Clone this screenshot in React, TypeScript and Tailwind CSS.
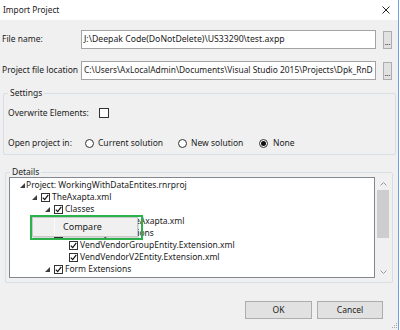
import React from "react";

const TreeCheck = () => (
  <span className="flex h-[9px] w-[9px] shrink-0 items-center justify-center border border-[#333] bg-white">
    <svg width="7" height="7" viewBox="0 0 7 7">
      <path d="M0.8 3.6 L2.7 5.6 L6.3 0.8" fill="none" stroke="#111" strokeWidth="1.2" />
    </svg>
  </span>
);

const Expander = () => (
  <svg width="5" height="5" viewBox="0 0 5 5" className="shrink-0">
    <polygon points="5,0 5,5 0,5" fill="#3c3c3c" />
  </svg>
);

type RowProps = {
  pad: string;
  slot: string;
  expand?: boolean;
  check?: boolean;
  text: string;
};

const TreeRow = ({ pad, slot, expand, check, text }: RowProps) => (
  <div className={`flex h-[12px] items-center whitespace-nowrap ${pad}`}>
    <span className={`flex shrink-0 items-center ${slot}`}>{expand && <Expander />}</span>
    {check && <TreeCheck />}
    <span className={check ? "ml-[2px]" : ""}>{text}</span>
  </div>
);

const Radio = ({ on }: { on?: boolean }) => (
  <span className="flex h-[9px] w-[9px] shrink-0 items-center justify-center rounded-full border border-[#333] bg-white">
    {on && <span className="h-[5px] w-[5px] rounded-full bg-[#111]" />}
  </span>
);

const Chevron = ({ down }: { down?: boolean }) => (
  <svg width="7" height="4" viewBox="0 0 7 4">
    <path d={down ? "M0.5 0.5 L3.5 3.5 L6.5 0.5" : "M0.5 3.5 L3.5 0.5 L6.5 3.5"} fill="none" stroke="#9a9a9a" strokeWidth="1" />
  </svg>
);

export default function App() {
  return (
    <div className="flex h-[330px] w-[400px] bg-white font-['Noto_Sans',sans-serif] text-[8.5px] text-[#1b1b1b]">
      <div className="relative flex h-[330px] w-[399px] flex-col overflow-hidden border-r border-[#6e9fe2] bg-[#f0f0f0]">
        {/* Title bar */}
        <div className="flex h-[20px] shrink-0 items-center justify-between bg-white pl-[3px] pr-[8px]">
          <span className="text-[8.3px]">Import Project</span>
          <svg width="8" height="8" viewBox="0 0 8 8">
            <path d="M0.5 0.5 L7.5 7.5 M7.5 0.5 L0.5 7.5" stroke="#222" strokeWidth="1" />
          </svg>
        </div>

        {/* File name */}
        <div className="mt-[10px] flex h-[19px] items-center">
          <span className="w-[81px] pl-[2px]">File name:</span>
          <div className="flex h-[19px] w-[295px] items-center overflow-hidden whitespace-nowrap border border-[#a3a3a3] bg-white pl-[2px] text-[8.7px]">
            J:\Deepak Code(DoNotDelete)\US33290\test.axpp
          </div>
          <div className="ml-[7px] flex h-[18px] w-[9px] items-end justify-center border border-[#adadad] bg-[#e1e1e1] pb-[2px] text-[7px] leading-[6px]">
            ...
          </div>
        </div>

        {/* Project file location */}
        <div className="mt-[12px] flex h-[19px] items-center">
          <span className="w-[81px] whitespace-nowrap pl-[2px]">Project file location</span>
          <div className="flex h-[19px] w-[295px] items-center overflow-hidden whitespace-nowrap border border-[#a3a3a3] bg-white pl-[2px] text-[8.4px]">
            C:\Users\AxLocalAdmin\Documents\Visual Studio 2015\Projects\Dpk_RnD
          </div>
          <div className="ml-[7px] flex h-[18px] w-[9px] items-end justify-center border border-[#adadad] bg-[#e1e1e1] pb-[2px] text-[7px] leading-[6px]">
            ...
          </div>
        </div>

        {/* Settings */}
        <fieldset className="ml-[3px] mt-[7px] w-[393px] rounded-[2px] border border-[#d5dfe5] pb-[5px] pl-[4px]">
          <legend className="px-[2px] leading-[12px]">Settings</legend>
          <div className="mt-[8px] flex h-[12px] items-center">
            <span className="w-[91px]">Overwrite Elements:</span>
            <span className="h-[10px] w-[10px] border border-[#333] bg-white" />
          </div>
          <div className="mt-[18px] flex h-[12px] items-center">
            <span className="w-[77px]">Open project in:</span>
            <div className="flex w-[93px] items-center gap-[4px]">
              <Radio />
              <span>Current solution</span>
            </div>
            <div className="flex w-[81px] items-center gap-[4px]">
              <Radio />
              <span>New solution</span>
            </div>
            <div className="flex items-center gap-[5px]">
              <Radio on />
              <span>None</span>
            </div>
          </div>
        </fieldset>

        {/* Details */}
        <fieldset className="ml-[5px] mt-[12px] w-[388px] rounded-[2px] border border-[#d5dfe5] pb-[4px] pl-[3px]">
          <legend className="ml-[1px] px-[2px] leading-[10px]">Details</legend>
          <div className="flex">
            <div className="h-[101px] w-[366px] overflow-hidden border border-[#828790] bg-white pt-[1px]">
              <TreeRow pad="pl-[10px]" slot="w-[6px]" expand text="Project: WorkingWithDataEntites.rnrproj" />
              <TreeRow pad="pl-[22px]" slot="w-[9px]" expand check text="TheAxapta.xml" />
              <TreeRow pad="pl-[35px]" slot="w-[9px]" expand check text="Classes" />
              <TreeRow pad="pl-[49px]" slot="w-[10px]" check text="VendTable_TheAxapta.xml" />
              <TreeRow pad="pl-[35px]" slot="w-[9px]" expand check text="Data Entity Extensions" />
              <TreeRow pad="pl-[49px]" slot="w-[10px]" check text="VendVendorGroupEntity.Extension.xml" />
              <TreeRow pad="pl-[49px]" slot="w-[10px]" check text="VendVendorV2Entity.Extension.xml" />
              <TreeRow pad="pl-[35px]" slot="w-[9px]" expand check text="Form Extensions" />
              <TreeRow pad="pl-[49px]" slot="w-[10px]" check text="VendTable.Extension.xml" />
            </div>
            <div className="flex h-[101px] w-[16px] flex-col items-center bg-[#f0f0f0]">
              <div className="flex h-[13px] items-center">
                <Chevron />
              </div>
              <div className="h-[48px] w-[12px] bg-[#cdcdcd]" />
              <div className="flex-1" />
              <div className="flex h-[13px] items-center">
                <Chevron down />
              </div>
            </div>
          </div>
        </fieldset>

        {/* Buttons */}
        <div className="mt-[18px] flex justify-end gap-[5px] pr-[15px]">
          <button className="h-[18px] w-[67px] border border-[#adadad] bg-[#e1e1e1]">OK</button>
          <button className="h-[18px] w-[66px] border border-[#adadad] bg-[#e1e1e1]">Cancel</button>
        </div>

        {/* Resize grip */}
        <div className="absolute bottom-[2px] right-[1px] grid grid-cols-3 gap-[1px]">
          <span />
          <span />
          <span className="h-[1px] w-[1px] bg-[#a8a8a8]" />
          <span />
          <span className="h-[1px] w-[1px] bg-[#a8a8a8]" />
          <span className="h-[1px] w-[1px] bg-[#a8a8a8]" />
          <span className="h-[1px] w-[1px] bg-[#a8a8a8]" />
          <span className="h-[1px] w-[1px] bg-[#a8a8a8]" />
          <span className="h-[1px] w-[1px] bg-[#a8a8a8]" />
        </div>

        {/* Context menu with highlight */}
        <div className="absolute left-[30px] top-[215px] h-[25px] w-[113px] border-2 border-[#2cb24b]">
          <div className="flex h-[20px] w-[106px] border border-[#c8c8c8] bg-[#f0f0f0] shadow-[1px_1px_1px_rgba(0,0,0,0.15)]">
            <div className="w-[22px] border-r border-[#fbfbfb]" />
            <span className="ml-[8px] flex items-center text-[9px]">Compare</span>
          </div>
        </div>
      </div>
    </div>
  );
}
